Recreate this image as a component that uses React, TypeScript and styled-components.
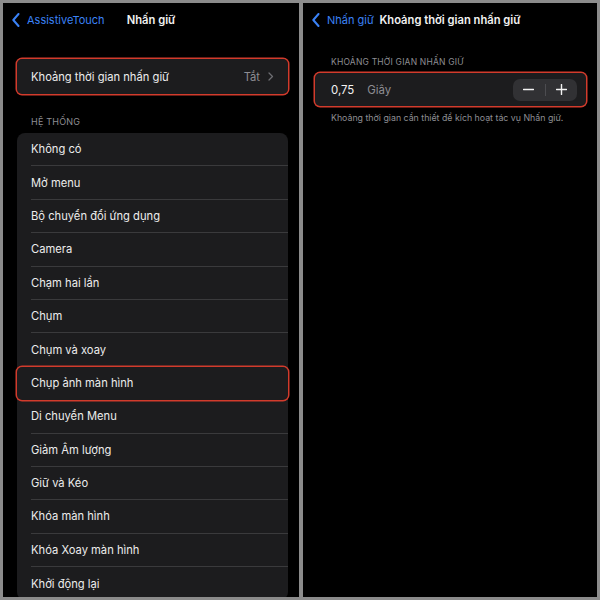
import React from 'react';
import styled, { createGlobalStyle } from 'styled-components';

const GlobalStyle = createGlobalStyle`
  html, body {
    margin: 0;
    padding: 0;
    background: #8b8b8b;
  }
  body {
    font-family: Inter, "Noto Sans", "Liberation Sans", sans-serif;
    -webkit-font-smoothing: antialiased;
  }
`;

const Frame = styled.div`
  width: 600px;
  height: 600px;
  box-sizing: border-box;
  padding: 3px;
  display: grid;
  grid-template-columns: 296px 294px;
  gap: 4px;
  background: #8b8b8b;
`;

const Screen = styled.div`
  background: #000;
  overflow: hidden;
  display: flex;
  flex-direction: column;
`;

const NavBar = styled.div`
  height: 34px;
  flex-shrink: 0;
  display: grid;
  grid-template-columns: 1fr auto 1fr;
  align-items: center;
  padding: 0 9px;
`;

const BackButton = styled.div`
  display: flex;
  align-items: center;
  gap: 7px;
  color: #3b82f6;
  font-size: 11px;
  white-space: nowrap;
`;

const NavTitle = styled.div`
  color: #f2f2f2;
  font-size: 11.2px;
  font-weight: 600;
  white-space: nowrap;
`;

const Content = styled.div<{ $left: number; $right: number; $top: number }>`
  padding: ${({ $top, $left, $right }) => `${$top}px ${$right}px 0 ${$left}px`};
  display: flex;
  flex-direction: column;
`;

const Card = styled.div<{ $radius: number }>`
  background: #1c1c1e;
  border-radius: ${({ $radius }) => $radius}px;
  display: flex;
  flex-direction: column;
`;

const Row = styled.div<{ $h: number; $marked?: boolean }>`
  height: ${({ $h }) => $h}px;
  flex-shrink: 0;
  display: flex;
  align-items: stretch;
  padding-left: 14px;
  position: relative;
  border-radius: 5px;
  ${({ $marked }) =>
    $marked &&
    `
    z-index: 1;
    box-shadow: 0 0 0 1.5px #d23b2c;
  `}
`;

const RowBody = styled.div<{ $line?: boolean }>`
  flex: 1;
  display: flex;
  align-items: center;
  padding-right: 14px;
  border-bottom: ${({ $line }) => ($line ? '0.5px solid #3a3a3c' : 'none')};
`;

const RowLabel = styled.span`
  flex: 1;
  color: #ececec;
  font-size: 11.2px;
  white-space: nowrap;
`;

const RowValue = styled.span`
  color: #8e8e93;
  font-size: 11.2px;
  margin-right: 8px;
`;

const GroupHeader = styled.div<{ $top: number; $bottom: number; $size: number; $inset: number }>`
  padding: ${({ $top, $bottom, $inset }) => `${$top}px 0 ${$bottom}px ${$inset}px`};
  color: #8e8e93;
  font-size: ${({ $size }) => $size}px;
  line-height: 11px;
  text-transform: uppercase;
  letter-spacing: 0.2px;
  white-space: nowrap;
`;

const ValueRow = styled.div`
  height: 33px;
  background: #1c1c1e;
  border-radius: 5px;
  box-shadow: 0 0 0 1.5px #d23b2c;
  display: flex;
  align-items: center;
  padding: 0 9px 0 16px;
`;

const Value = styled.span`
  color: #f2f2f2;
  font-size: 11.4px;
`;

const Unit = styled.span`
  color: #8e8e93;
  font-size: 11.4px;
  margin-left: 13px;
  flex: 1;
`;

const Stepper = styled.div`
  width: 64px;
  height: 22px;
  background: #313134;
  border-radius: 7px;
  display: flex;
  align-items: center;
`;

const StepButton = styled.div`
  flex: 1;
  height: 100%;
  display: flex;
  align-items: center;
  justify-content: center;
`;

const StepDivider = styled.div`
  width: 1px;
  height: 12px;
  background: #4c4c50;
`;

const Footnote = styled.div`
  padding: 6px 0 0 16px;
  color: #8e8e93;
  font-size: 8.8px;
  line-height: 11px;
  white-space: nowrap;
`;

const Chevron = () => (
  <svg width="8" height="14" viewBox="0 0 8 14" fill="none">
    <path d="M6.5 1 L1.3 7 L6.5 13" stroke="#3b82f6" strokeWidth="2" strokeLinecap="round" strokeLinejoin="round" />
  </svg>
);

const Disclosure = () => (
  <svg width="6" height="9" viewBox="0 0 6 9" fill="none">
    <path d="M1 1 L4.5 4.5 L1 8" stroke="#6d6d72" strokeWidth="1.3" strokeLinecap="round" strokeLinejoin="round" />
  </svg>
);

const Minus = () => (
  <svg width="11" height="11" viewBox="0 0 11 11">
    <path d="M0.5 5.5 H10.5" stroke="#f2f2f2" strokeWidth="1.4" strokeLinecap="round" />
  </svg>
);

const Plus = () => (
  <svg width="11" height="11" viewBox="0 0 11 11">
    <path d="M0.5 5.5 H10.5 M5.5 0.5 V10.5" stroke="#f2f2f2" strokeWidth="1.4" strokeLinecap="round" />
  </svg>
);

const actions = [
  'Không có',
  'Mở menu',
  'Bộ chuyển đổi ứng dụng',
  'Camera',
  'Chạm hai lần',
  'Chụm',
  'Chụm và xoay',
  'Chụp ảnh màn hình',
  'Di chuyển Menu',
  'Giảm Âm lượng',
  'Giữ và Kéo',
  'Khóa màn hình',
  'Khóa Xoay màn hình',
  'Khởi động lại',
];

const marked = 'Chụp ảnh màn hình';

const App: React.FC = () => {
  return (
    <>
      <GlobalStyle />
      <Frame>
        {/* Nhấn giữ */}
        <Screen>
          <NavBar>
            <BackButton>
              <Chevron />
              AssistiveTouch
            </BackButton>
            <NavTitle>Nhấn giữ</NavTitle>
            <span />
          </NavBar>
          <Content $top={22} $left={14} $right={11}>
            <Card $radius={5}>
              <Row $h={35} $marked>
                <RowBody>
                  <RowLabel>Khoảng thời gian nhấn giữ</RowLabel>
                  <RowValue>Tắt</RowValue>
                  <Disclosure />
                </RowBody>
              </Row>
            </Card>
            <GroupHeader $top={22} $bottom={6} $size={9} $inset={14}>
              Hệ thống
            </GroupHeader>
            <Card $radius={8}>
              {actions.map((name, i) => {
                const isMarked = name === marked;
                const nextMarked = actions[i + 1] === marked;
                return (
                  <Row key={name} $h={33.4} $marked={isMarked}>
                    <RowBody $line={!isMarked && !nextMarked && i < actions.length - 1}>
                      <RowLabel>{name}</RowLabel>
                    </RowBody>
                  </Row>
                );
              })}
            </Card>
          </Content>
        </Screen>

        {/* Khoảng thời gian nhấn giữ */}
        <Screen>
          <NavBar>
            <BackButton>
              <Chevron />
              Nhấn giữ
            </BackButton>
            <NavTitle>Khoảng thời gian nhấn giữ</NavTitle>
            <span />
          </NavBar>
          <Content $top={0} $left={12} $right={11}>
            <GroupHeader $top={20} $bottom={5} $size={8.5} $inset={16}>
              Khoảng thời gian nhấn giữ
            </GroupHeader>
            <ValueRow>
              <Value>0,75</Value>
              <Unit>Giây</Unit>
              <Stepper>
                <StepButton>
                  <Minus />
                </StepButton>
                <StepDivider />
                <StepButton>
                  <Plus />
                </StepButton>
              </Stepper>
            </ValueRow>
            <Footnote>Khoảng thời gian cần thiết để kích hoạt tác vụ Nhấn giữ.</Footnote>
          </Content>
        </Screen>
      </Frame>
    </>
  );
};

export default App;
